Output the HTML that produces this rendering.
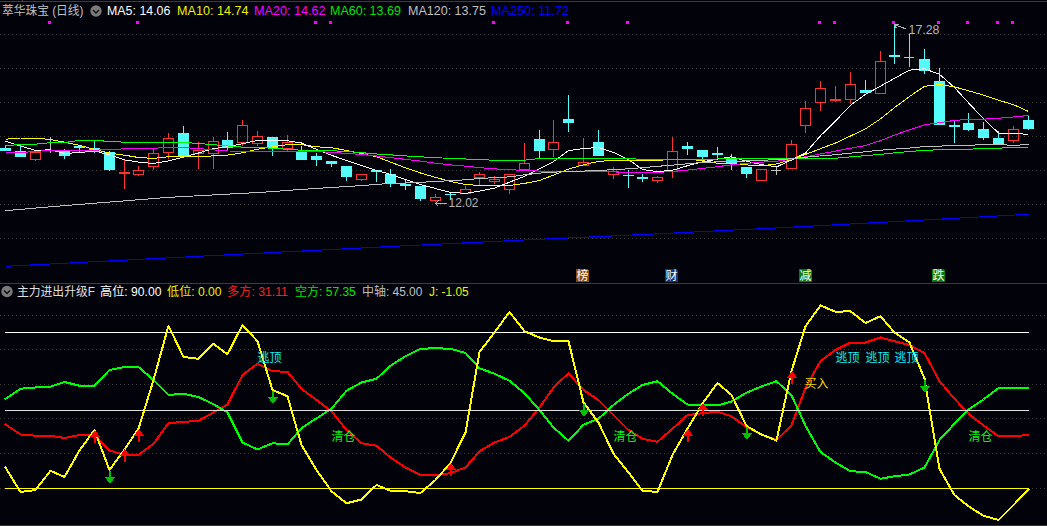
<!DOCTYPE html>
<html lang="zh-CN"><head><meta charset="utf-8"><title>萃华珠宝 (日线)</title>
<style>
html,body{margin:0;padding:0;background:#02020b;overflow:hidden}
#c{position:relative;width:1047px;height:526px;overflow:hidden;background:#02020b;font-family:"Liberation Sans","Noto Sans CJK SC",sans-serif;font-size:12px}
.t{position:absolute;white-space:nowrap;line-height:18px;height:18px;transform-origin:0 50%}
</style></head><body><div id="c">
<svg width="1047" height="526" viewBox="0 0 1047 526" style="position:absolute;left:0;top:0">
<rect width="1047" height="526" fill="#02020b"/>
<g shape-rendering="crispEdges">
<rect x="0" y="1" width="1047" height="1" fill="#3c3c3c"/>
<rect x="22" y="0" width="1" height="2" fill="#4a4a4a"/>
<rect x="0" y="283" width="1047" height="1" fill="#3c3c3c"/>
<rect x="0" y="525" width="1047" height="1" fill="#303030"/>
<line x1="0" y1="34.5" x2="1047" y2="34.5" stroke="#3a3a3a" stroke-width="1" stroke-dasharray="1 3"/>
<line x1="0" y1="68.5" x2="1047" y2="68.5" stroke="#3a3a3a" stroke-width="1" stroke-dasharray="1 3"/>
<line x1="0" y1="102.5" x2="1047" y2="102.5" stroke="#3a3a3a" stroke-width="1" stroke-dasharray="1 3"/>
<line x1="0" y1="136.5" x2="1047" y2="136.5" stroke="#3a3a3a" stroke-width="1" stroke-dasharray="1 3"/>
<line x1="0" y1="170.5" x2="1047" y2="170.5" stroke="#3a3a3a" stroke-width="1" stroke-dasharray="1 3"/>
<line x1="0" y1="204.5" x2="1047" y2="204.5" stroke="#3a3a3a" stroke-width="1" stroke-dasharray="1 3"/>
<line x1="0" y1="238.5" x2="1047" y2="238.5" stroke="#3a3a3a" stroke-width="1" stroke-dasharray="1 3"/>
<line x1="0" y1="315.5" x2="1047" y2="315.5" stroke="#3a3a3a" stroke-width="1" stroke-dasharray="1 3"/>
<line x1="0" y1="349.5" x2="1047" y2="349.5" stroke="#3a3a3a" stroke-width="1" stroke-dasharray="1 3"/>
<line x1="0" y1="384.5" x2="1047" y2="384.5" stroke="#3a3a3a" stroke-width="1" stroke-dasharray="1 3"/>
<line x1="0" y1="418.5" x2="1047" y2="418.5" stroke="#3a3a3a" stroke-width="1" stroke-dasharray="1 3"/>
<line x1="0" y1="453.5" x2="1047" y2="453.5" stroke="#3a3a3a" stroke-width="1" stroke-dasharray="1 3"/>
<line x1="0" y1="488.5" x2="1047" y2="488.5" stroke="#3a3a3a" stroke-width="1" stroke-dasharray="1 3"/>
<rect x="48" y="21" width="3" height="3" fill="#ff00ff"/>
<rect x="136" y="21" width="3" height="3" fill="#ff00ff"/>
<rect x="314" y="21" width="3" height="3" fill="#ff00ff"/>
<rect x="329" y="21" width="3" height="3" fill="#ff00ff"/>
<rect x="492" y="21" width="3" height="3" fill="#ff00ff"/>
<rect x="566" y="21" width="3" height="3" fill="#ff00ff"/>
<rect x="626" y="21" width="3" height="3" fill="#ff00ff"/>
<rect x="818" y="21" width="3" height="3" fill="#ff00ff"/>
<rect x="833" y="21" width="3" height="3" fill="#ff00ff"/>
<rect x="892" y="21" width="3" height="3" fill="#ff00ff"/>
<rect x="937" y="21" width="3" height="3" fill="#ff00ff"/>
<rect x="966" y="21" width="3" height="3" fill="#ff00ff"/>
<rect x="996" y="21" width="3" height="3" fill="#ff00ff"/>
<rect x="1011" y="21" width="3" height="3" fill="#ff00ff"/>
<rect x="5" y="145" width="1" height="6" fill="#54fcfc"/>
<rect x="0" y="148" width="11" height="3" fill="#54fcfc"/>
<rect x="20" y="146" width="1" height="11" fill="#54fcfc"/>
<rect x="15" y="151" width="11" height="6" fill="#54fcfc"/>
<rect x="35" y="160" width="1" height="1" fill="#ff3232"/>
<rect x="30.5" y="152.5" width="10" height="7" fill="none" stroke="#ff3232" stroke-width="1"/>
<rect x="50" y="137" width="1" height="16" fill="#c0c0c0"/>
<rect x="45" y="150" width="10" height="1" fill="#c0c0c0"/>
<rect x="64" y="149" width="1" height="10" fill="#54fcfc"/>
<rect x="59" y="150" width="11" height="6" fill="#54fcfc"/>
<rect x="79" y="145" width="1" height="8" fill="#54fcfc"/>
<rect x="74" y="146" width="11" height="2" fill="#54fcfc"/>
<rect x="94" y="141" width="1" height="12" fill="#54fcfc"/>
<rect x="89" y="148" width="11" height="4" fill="#54fcfc"/>
<rect x="109" y="151" width="1" height="20" fill="#54fcfc"/>
<rect x="104" y="152" width="11" height="18" fill="#54fcfc"/>
<rect x="124" y="160" width="1" height="29" fill="#ff3232"/>
<rect x="119" y="172" width="11" height="2" fill="#ff3232"/>
<rect x="138" y="166" width="1" height="4" fill="#ff3232"/>
<rect x="138" y="175" width="1" height="1" fill="#ff3232"/>
<rect x="133.5" y="170.5" width="10" height="4" fill="none" stroke="#ff3232" stroke-width="1"/>
<rect x="153" y="149" width="1" height="4" fill="#ff3232"/>
<rect x="153" y="167" width="1" height="3" fill="#ff3232"/>
<rect x="148.5" y="153.5" width="10" height="13" fill="none" stroke="#ff3232" stroke-width="1"/>
<rect x="168" y="133" width="1" height="5" fill="#ff3232"/>
<rect x="168" y="153" width="1" height="6" fill="#ff3232"/>
<rect x="163.5" y="138.5" width="10" height="14" fill="none" stroke="#ff3232" stroke-width="1"/>
<rect x="183" y="126" width="1" height="31" fill="#54fcfc"/>
<rect x="178" y="133" width="11" height="24" fill="#54fcfc"/>
<rect x="198" y="142" width="1" height="8" fill="#ff3232"/>
<rect x="198" y="154" width="1" height="15" fill="#ff3232"/>
<rect x="193.5" y="150.5" width="10" height="3" fill="none" stroke="#ff3232" stroke-width="1"/>
<rect x="213" y="137" width="1" height="4" fill="#ff3232"/>
<rect x="213" y="154" width="1" height="15" fill="#ff3232"/>
<rect x="208.5" y="141.5" width="10" height="12" fill="none" stroke="#ff3232" stroke-width="1"/>
<rect x="227" y="132" width="1" height="19" fill="#54fcfc"/>
<rect x="222" y="140" width="11" height="8" fill="#54fcfc"/>
<rect x="242" y="120" width="1" height="5" fill="#ff3232"/>
<rect x="242" y="143" width="1" height="3" fill="#ff3232"/>
<rect x="237.5" y="125.5" width="10" height="17" fill="none" stroke="#ff3232" stroke-width="1"/>
<rect x="257" y="131" width="1" height="5" fill="#ff3232"/>
<rect x="257" y="144" width="1" height="2" fill="#ff3232"/>
<rect x="252.5" y="136.5" width="10" height="7" fill="none" stroke="#ff3232" stroke-width="1"/>
<rect x="272" y="137" width="1" height="19" fill="#54fcfc"/>
<rect x="267" y="137" width="11" height="11" fill="#54fcfc"/>
<rect x="287" y="135" width="1" height="7" fill="#ff3232"/>
<rect x="287" y="149" width="1" height="3" fill="#ff3232"/>
<rect x="282.5" y="142.5" width="10" height="6" fill="none" stroke="#ff3232" stroke-width="1"/>
<rect x="301" y="146" width="1" height="14" fill="#54fcfc"/>
<rect x="296" y="152" width="11" height="8" fill="#54fcfc"/>
<rect x="316" y="153" width="1" height="13" fill="#54fcfc"/>
<rect x="311" y="156" width="11" height="4" fill="#54fcfc"/>
<rect x="331" y="161" width="1" height="6" fill="#54fcfc"/>
<rect x="326" y="161" width="11" height="3" fill="#54fcfc"/>
<rect x="346" y="166" width="1" height="15" fill="#54fcfc"/>
<rect x="341" y="166" width="11" height="11" fill="#54fcfc"/>
<rect x="361" y="180" width="1" height="1" fill="#ff3232"/>
<rect x="356.5" y="174.5" width="10" height="5" fill="none" stroke="#ff3232" stroke-width="1"/>
<rect x="376" y="170" width="1" height="12" fill="#54fcfc"/>
<rect x="371" y="170" width="11" height="2" fill="#54fcfc"/>
<rect x="390" y="169" width="1" height="18" fill="#54fcfc"/>
<rect x="385" y="174" width="11" height="10" fill="#54fcfc"/>
<rect x="405" y="180" width="1" height="10" fill="#54fcfc"/>
<rect x="400" y="184" width="11" height="2" fill="#54fcfc"/>
<rect x="420" y="186" width="1" height="15" fill="#54fcfc"/>
<rect x="415" y="186" width="11" height="13" fill="#54fcfc"/>
<rect x="435" y="194" width="1" height="3" fill="#ff3232"/>
<rect x="435" y="201" width="1" height="1" fill="#ff3232"/>
<rect x="430.5" y="197.5" width="10" height="3" fill="none" stroke="#ff3232" stroke-width="1"/>
<rect x="450" y="192" width="1" height="8" fill="#54fcfc"/>
<rect x="445" y="194" width="11" height="1" fill="#54fcfc"/>
<rect x="465" y="186" width="1" height="3" fill="#ff3232"/>
<rect x="460.5" y="189.5" width="10" height="4" fill="none" stroke="#ff3232" stroke-width="1"/>
<rect x="479" y="172" width="1" height="2" fill="#ff3232"/>
<rect x="479" y="178" width="1" height="7" fill="#ff3232"/>
<rect x="474.5" y="174.5" width="10" height="3" fill="none" stroke="#ff3232" stroke-width="1"/>
<rect x="494" y="176" width="1" height="3" fill="#ff3232"/>
<rect x="494" y="182" width="1" height="2" fill="#ff3232"/>
<rect x="489.5" y="179.5" width="10" height="2" fill="none" stroke="#ff3232" stroke-width="1"/>
<rect x="509" y="190" width="1" height="4" fill="#ff3232"/>
<rect x="504.5" y="174.5" width="10" height="15" fill="none" stroke="#ff3232" stroke-width="1"/>
<rect x="524" y="143" width="1" height="20" fill="#ff3232"/>
<rect x="519.5" y="163.5" width="10" height="6" fill="none" stroke="#ff3232" stroke-width="1"/>
<rect x="539" y="130" width="1" height="29" fill="#54fcfc"/>
<rect x="534" y="139" width="11" height="12" fill="#54fcfc"/>
<rect x="553" y="120" width="1" height="22" fill="#ff3232"/>
<rect x="553" y="150" width="1" height="7" fill="#ff3232"/>
<rect x="548.5" y="142.5" width="10" height="7" fill="none" stroke="#ff3232" stroke-width="1"/>
<rect x="568" y="95" width="1" height="37" fill="#54fcfc"/>
<rect x="563" y="119" width="11" height="4" fill="#54fcfc"/>
<rect x="583" y="138" width="1" height="24" fill="#ff3232"/>
<rect x="578.5" y="162.5" width="10" height="3" fill="none" stroke="#ff3232" stroke-width="1"/>
<rect x="598" y="130" width="1" height="26" fill="#54fcfc"/>
<rect x="593" y="142" width="11" height="14" fill="#54fcfc"/>
<rect x="613" y="167" width="1" height="4" fill="#ff3232"/>
<rect x="613" y="175" width="1" height="4" fill="#ff3232"/>
<rect x="608.5" y="171.5" width="10" height="3" fill="none" stroke="#ff3232" stroke-width="1"/>
<rect x="628" y="170" width="1" height="18" fill="#54fcfc"/>
<rect x="623" y="175" width="11" height="1" fill="#54fcfc"/>
<rect x="642" y="174" width="1" height="8" fill="#54fcfc"/>
<rect x="637" y="177" width="11" height="2" fill="#54fcfc"/>
<rect x="657" y="176" width="1" height="1" fill="#ff3232"/>
<rect x="657" y="181" width="1" height="2" fill="#ff3232"/>
<rect x="652.5" y="177.5" width="10" height="3" fill="none" stroke="#ff3232" stroke-width="1"/>
<rect x="672" y="137" width="1" height="14" fill="#ff3232"/>
<rect x="672" y="172" width="1" height="6" fill="#ff3232"/>
<rect x="667.5" y="151.5" width="10" height="20" fill="none" stroke="#ff3232" stroke-width="1"/>
<rect x="687" y="142" width="1" height="13" fill="#54fcfc"/>
<rect x="682" y="146" width="11" height="3" fill="#54fcfc"/>
<rect x="702" y="150" width="1" height="10" fill="#54fcfc"/>
<rect x="697" y="150" width="11" height="7" fill="#54fcfc"/>
<rect x="717" y="147" width="1" height="11" fill="#54fcfc"/>
<rect x="712" y="153" width="11" height="2" fill="#54fcfc"/>
<rect x="731" y="154" width="1" height="16" fill="#54fcfc"/>
<rect x="726" y="158" width="11" height="6" fill="#54fcfc"/>
<rect x="746" y="167" width="1" height="11" fill="#54fcfc"/>
<rect x="741" y="167" width="11" height="7" fill="#54fcfc"/>
<rect x="756.5" y="169.5" width="10" height="11" fill="none" stroke="#ff3232" stroke-width="1"/>
<rect x="776" y="167" width="1" height="8" fill="#c0c0c0"/>
<rect x="771" y="170" width="10" height="1" fill="#c0c0c0"/>
<rect x="791" y="140" width="1" height="4" fill="#ff3232"/>
<rect x="786.5" y="144.5" width="10" height="24" fill="none" stroke="#ff3232" stroke-width="1"/>
<rect x="805" y="101" width="1" height="7" fill="#ff3232"/>
<rect x="805" y="126" width="1" height="7" fill="#ff3232"/>
<rect x="800.5" y="108.5" width="10" height="17" fill="none" stroke="#ff3232" stroke-width="1"/>
<rect x="820" y="81" width="1" height="7" fill="#ff3232"/>
<rect x="820" y="103" width="1" height="8" fill="#ff3232"/>
<rect x="815.5" y="88.5" width="10" height="14" fill="none" stroke="#ff3232" stroke-width="1"/>
<rect x="835" y="86" width="1" height="16" fill="#ff3232"/>
<rect x="830" y="99" width="11" height="2" fill="#ff3232"/>
<rect x="850" y="72" width="1" height="12" fill="#ff3232"/>
<rect x="850" y="100" width="1" height="4" fill="#ff3232"/>
<rect x="845.5" y="84.5" width="10" height="15" fill="none" stroke="#ff3232" stroke-width="1"/>
<rect x="865" y="80" width="1" height="13" fill="#54fcfc"/>
<rect x="860" y="90" width="11" height="3" fill="#54fcfc"/>
<rect x="880" y="51" width="1" height="10" fill="#ff3232"/>
<rect x="875.5" y="61.5" width="10" height="32" fill="none" stroke="#ff3232" stroke-width="1"/>
<rect x="894" y="24" width="1" height="40" fill="#54fcfc"/>
<rect x="889" y="55" width="11" height="2" fill="#54fcfc"/>
<rect x="909" y="34" width="1" height="33" fill="#c0c0c0"/>
<rect x="904" y="57" width="10" height="1" fill="#c0c0c0"/>
<rect x="924" y="49" width="1" height="25" fill="#54fcfc"/>
<rect x="919" y="59" width="11" height="12" fill="#54fcfc"/>
<rect x="939" y="68" width="1" height="57" fill="#54fcfc"/>
<rect x="934" y="81" width="11" height="44" fill="#54fcfc"/>
<rect x="954" y="120" width="1" height="23" fill="#54fcfc"/>
<rect x="949" y="125" width="11" height="2" fill="#54fcfc"/>
<rect x="968" y="113" width="1" height="18" fill="#54fcfc"/>
<rect x="963" y="123" width="11" height="7" fill="#54fcfc"/>
<rect x="983" y="122" width="1" height="18" fill="#54fcfc"/>
<rect x="978" y="129" width="11" height="9" fill="#54fcfc"/>
<rect x="998" y="131" width="1" height="13" fill="#54fcfc"/>
<rect x="993" y="138" width="11" height="6" fill="#54fcfc"/>
<rect x="1013" y="126" width="1" height="3" fill="#ff3232"/>
<rect x="1013" y="141" width="1" height="2" fill="#ff3232"/>
<rect x="1008.5" y="129.5" width="10" height="11" fill="none" stroke="#ff3232" stroke-width="1"/>
<rect x="1028" y="116" width="1" height="14" fill="#54fcfc"/>
<rect x="1023" y="120" width="11" height="9" fill="#54fcfc"/>
</g>
<g fill="none" stroke-width="1" shape-rendering="crispEdges" stroke-linejoin="round">
<polyline stroke="#0000ff" points="5.5,266.3 220,255.2 400,246 524,240 650,234.2 785,227.5 900,221.3 1028.5,214.3"/>
<polyline stroke="#ffffff" points="5.5,141.2 20.5,145.96 35.5,150.4 50.5,149.8 64.5,153.4 79.5,152.6 94.5,150.9 109.5,154.94 124.5,159.89 138.5,162.07 153.5,163.5 168.5,160.95 183.5,157.19 198.5,153.02 213.5,148.65 227.5,146.7 242.5,143.7 257.5,140.4 272.5,140.1 287.5,140.73 301.5,143 316.5,149.38 331.5,155.34 346.5,160.4 361.5,165.38 376.5,170.48 390.5,174.37 405.5,179.54 420.5,184.6 435.5,188.5 450.5,192.4 465.5,193.4 479.5,191.2 494.5,188.1 509.5,182.2 524.5,176.39 539.5,168.79 553.5,161.6 568.5,150.61 583.5,148.45 598.5,147.6 613.5,152.34 628.5,159.53 642.5,169.49 657.5,171.6 672.5,170.29 687.5,165.69 702.5,161.94 717.5,159.12 731.5,156.8 746.5,161.23 761.5,164.6 776.5,166.9 791.5,160.01 805.5,153 820.5,135.8 835.5,121 850.5,105.2 865.5,94.4 880.5,86.1 894.5,78.3 909.5,70.1 924.5,68.8 939.5,74.3 954.5,87.5 968.5,102.8 983.5,118.8 998.5,133 1013.5,133.3 1028.5,134.4"/>
<polyline stroke="#ffff00" points="5.5,139.2 20.5,138 35.5,138 50.5,139.61 64.5,142.16 79.5,145.4 94.5,149.35 109.5,153.15 124.5,155.18 138.5,157.5 153.5,158.4 168.5,156.7 183.5,156.7 198.5,156.7 213.5,155.9 227.5,155.1 242.5,152.8 257.5,149.2 272.5,146.8 287.5,144.6 301.5,144.6 316.5,146.81 331.5,147.68 346.5,150.52 361.5,153.56 376.5,156.71 390.5,162.1 405.5,167.8 420.5,173 435.5,177.4 450.5,181.4 465.5,184.5 479.5,185.5 494.5,185.5 509.5,185.5 524.5,183.4 539.5,180.5 553.5,175.1 568.5,169.1 583.5,164.8 598.5,161.4 613.5,160.4 628.5,160.4 642.5,160.2 657.5,160.2 672.5,159.68 687.5,159.4 702.5,160.48 717.5,163.28 731.5,163.95 746.5,164.95 761.5,165.7 776.5,164 791.5,159.62 805.5,154.4 820.5,148.7 835.5,143 850.5,136 865.5,128.8 880.5,118.9 894.5,107.6 909.5,96.5 924.5,86.3 939.5,84.5 954.5,86.9 968.5,90.8 983.5,95.1 998.5,100.3 1013.5,104.6 1028.5,111.5"/>
<polyline stroke="#ff00ff" points="5.5,152.4 20.5,152.4 35.5,151.6 50.5,150.1 64.5,150.4 79.5,150.4 94.5,150.1 109.5,149.77 124.5,148.78 138.5,148.41 153.5,148.1 168.5,147.8 183.5,147.6 198.5,148.55 213.5,149.85 227.5,151 242.5,151.1 257.5,151.1 272.5,151.1 287.5,151.1 301.5,151.3 316.5,151.6 331.5,152.33 346.5,153.44 361.5,154.39 376.5,156.01 390.5,157.62 405.5,159.35 420.5,161.09 435.5,163.19 450.5,164.88 465.5,166.13 479.5,167.63 494.5,168.84 509.5,169.82 524.5,170.26 539.5,171.12 553.5,171.4 568.5,171.4 583.5,171.4 598.5,171.62 613.5,171.94 628.5,172.4 642.5,172.4 657.5,172.4 672.5,171.51 687.5,170.07 702.5,168.44 717.5,166.68 731.5,164.82 746.5,163.41 761.5,162.14 776.5,161.3 791.5,159.12 805.5,156.8 820.5,153.9 835.5,151.1 850.5,148.2 865.5,145.5 880.5,140.7 894.5,135.1 909.5,129.9 924.5,124.8 939.5,122.7 954.5,120.4 968.5,119.4 983.5,119.2 998.5,118.2 1013.5,117 1028.5,115.4"/>
<polyline stroke="#00ff00" points="5.5,145.4 20.5,144.69 35.5,144.16 50.5,142.6 64.5,142.6 79.5,140.4 94.5,140.4 109.5,141.42 124.5,142.2 138.5,142.2 153.5,142.2 168.5,142.3 183.5,142.3 198.5,143.54 213.5,144.68 227.5,146 242.5,147.11 257.5,147.61 272.5,148.15 287.5,149.35 301.5,150.2 316.5,150.5 331.5,150.72 346.5,151.45 361.5,152.67 376.5,153.96 390.5,154.81 405.5,155.92 420.5,156.83 435.5,157.64 450.5,158.43 465.5,158.97 479.5,159.81 494.5,160.11 509.5,160.4 524.5,160.15 539.5,158.5 553.5,158.5 568.5,158.5 583.5,158.5 598.5,158.5 613.5,158.5 628.5,158.5 642.5,159.5 657.5,159.5 672.5,159.5 687.5,159.5 702.5,159.5 717.5,158.98 731.5,158.78 746.5,158.5 761.5,158.5 776.5,158.5 791.5,158.5 805.5,158.5 820.5,158.5 835.5,158.19 850.5,156.89 865.5,155.66 880.5,154.32 894.5,152.9 909.5,151.42 924.5,150.42 939.5,149.68 954.5,149.48 968.5,149.25 983.5,148.48 998.5,148.14 1013.5,147.56 1028.5,147.15"/>
<polyline stroke="#c0c0c0" points="5.5,210.7 50,206.8 100,202.8 168,197.4 212,195 262,192.3 300,189.5 346.5,186.5 361.5,185.63 376.5,184.34 390.5,183.49 405.5,182.98 420.5,182.36 435.5,181.46 450.5,180.65 465.5,179.79 479.5,178.48 494.5,177.67 509.5,176.89 524.5,174.79 539.5,173.12 553.5,172.18 568.5,171.39 583.5,171.07 598.5,170.54 613.5,169.64 628.5,168.79 642.5,167.65 657.5,166.34 672.5,165.11 687.5,163.79 702.5,162.44 717.5,161.86 731.5,161.47 746.5,160.95 761.5,160.18 776.5,159.81 791.5,158.73 805.5,157.23 820.5,155.92 835.5,154.68 850.5,153.17 865.5,151.73 880.5,150.17 894.5,149.14 909.5,148.1 924.5,146.6 939.5,146.1 954.5,145.5 968.5,145.5 983.5,144.4 998.5,144.4 1013.5,145.5 1028.5,144.4"/>
</g>
<g font-family="'Liberation Sans',sans-serif" font-size="12" fill="#b4b4b4" stroke="#b4b4b4" stroke-width="1" shape-rendering="crispEdges">
<path d="M435.5 203.5H447 M435.5 203.5l3 -3 M435.5 203.5l3 3" fill="none"/>
<path d="M894.5 24.5L906 29 M894.5 24.5l4.5 -.5 M894.5 24.5l2 4" fill="none"/>
</g>
<text x="448.5" y="207" font-family="'Liberation Sans',sans-serif" font-size="12" fill="#b4b4b4" textLength="30" lengthAdjust="spacingAndGlyphs">12.02</text>
<text x="908.5" y="33.5" font-family="'Liberation Sans',sans-serif" font-size="12" fill="#b4b4b4" textLength="31" lengthAdjust="spacingAndGlyphs">17.28</text>
<g shape-rendering="crispEdges">
<rect x="5" y="332" width="1024" height="1" fill="#ffffff"/>
<rect x="5" y="488" width="1024" height="1" fill="#ffff00"/>
</g>
<g fill="none" stroke-width="2" shape-rendering="crispEdges" stroke-linejoin="round" stroke-linecap="round">
<polyline stroke="#ff0000" points="5.5,424.5 20.5,434.5 35.5,435.75 50.5,435.75 64.5,438 79.5,435 94.5,435 109.5,450.5 124.5,455 138.5,455 153.5,443.75 168.5,423 183.5,422 198.5,420.75 213.5,412.5 227.5,404.5 242.5,375 257.5,363.75 272.5,371.25 287.5,371.75 301.5,388.75 316.5,400 331.5,411.25 346.5,430 361.5,443.25 376.5,445.75 390.5,457.5 405.5,467.5 420.5,475 435.5,475 450.5,473.25 465.5,467.5 479.5,451.25 494.5,442.5 509.5,437 524.5,425.5 539.5,407.5 553.5,387.5 568.5,373.25 583.5,390 598.5,400 613.5,415 628.5,430 642.5,438.75 657.5,441.75 672.5,428.75 687.5,415 702.5,413.25 717.5,411.5 731.5,416.5 746.5,427 761.5,434.5 776.5,440 791.5,425.2 805.5,387.8 820.5,361 835.5,350 850.5,342.5 865.5,342.5 880.5,337.5 894.5,341.25 909.5,345 924.5,353 939.5,381.25 954.5,398.75 968.5,413.75 983.5,425.5 998.5,436.25 1013.5,436.25 1028.5,435"/>
<polyline stroke="#00ff00" points="5.5,398.75 20.5,388.75 35.5,387.5 50.5,386.75 64.5,382 79.5,385.75 94.5,385.75 109.5,370 124.5,367 138.5,367 153.5,380 168.5,395 183.5,393.75 198.5,397 213.5,404.25 227.5,412.5 242.5,442.5 257.5,449.5 272.5,443.25 287.5,444.5 301.5,428 316.5,418.4 331.5,408.75 346.5,390.75 361.5,382.5 376.5,378.75 390.5,365.75 405.5,356.25 420.5,348.75 435.5,348.25 450.5,348.75 465.5,353 479.5,368.25 494.5,373.75 509.5,380.75 524.5,393.25 539.5,410 553.5,427.5 568.5,440.75 583.5,424.75 598.5,418.75 613.5,405 628.5,393.75 642.5,385 657.5,381.25 672.5,393.75 687.5,404.5 702.5,405.2 717.5,405.5 731.5,401.5 746.5,392.75 761.5,386.5 776.5,381.2 791.5,395.2 805.5,425.8 820.5,452 835.5,462.5 850.5,471.25 865.5,472 880.5,478.75 894.5,476.25 909.5,474.5 924.5,467.5 939.5,440 954.5,423.75 968.5,409.4 983.5,399.5 998.5,388.25 1013.5,388.25 1028.5,388.25"/>
</g>
<rect x="5" y="410" width="1024" height="1" fill="#e0e0e0" shape-rendering="crispEdges"/>
<g fill="none" stroke-width="2" shape-rendering="crispEdges" stroke-linejoin="round" stroke-linecap="round">
<polyline stroke="#ffff00" points="5.5,467.5 20.5,492 35.5,490 50.5,470.75 64.5,477 79.5,450.5 94.5,430 109.5,470 124.5,449.5 138.5,428.75 153.5,380 168.5,325.75 183.5,357 198.5,358.75 213.5,343.75 227.5,354.25 242.5,325 257.5,341.25 272.5,390 287.5,396.25 301.5,445 316.5,470 331.5,491.25 346.5,503.25 361.5,499.5 376.5,485 390.5,490.75 405.5,491.25 420.5,493 435.5,480 450.5,463 465.5,432.5 479.5,352 494.5,332.5 509.5,312 524.5,331.25 539.5,337.5 553.5,341.25 568.5,341.25 583.5,402.5 598.5,422.5 613.5,453.75 628.5,472.5 642.5,490.75 657.5,492 672.5,455 687.5,428.75 702.5,403.5 717.5,383 731.5,395 746.5,426 761.5,434.5 776.5,440.5 791.5,371 805.5,326.25 820.5,305.5 835.5,311.75 850.5,311.25 865.5,323 880.5,316.25 894.5,332.5 909.5,342.5 924.5,378.5 939.5,468.75 954.5,495 968.5,506.25 983.5,515.75 998.5,520 1013.5,505 1028.5,489.5"/>
</g>
<g shape-rendering="crispEdges">
<path d="M94 431h2l4 6h-4v6h-2v-6h-4z" fill="#ff0000"/>
<path d="M124 450h2l4 6h-4v6h-2v-6h-4z" fill="#ff0000"/>
<path d="M138 430h2l4 6h-4v6h-2v-6h-4z" fill="#ff0000"/>
<path d="M450 464h2l4 6h-4v6h-2v-6h-4z" fill="#ff0000"/>
<path d="M687 430h2l4 6h-4v6h-2v-6h-4z" fill="#ff0000"/>
<path d="M702 404h2l4 6h-4v6h-2v-6h-4z" fill="#ff0000"/>
<path d="M791 372h2l4 6h-4v6h-2v-6h-4z" fill="#ff0000"/>
<path d="M109 471h2v6h4l-4 6h-2l-4 -6h4z" fill="#00c000"/>
<path d="M272 391h2v6h4l-4 6h-2l-4 -6h4z" fill="#00c000"/>
<path d="M583 404h2v6h4l-4 6h-2l-4 -6h4z" fill="#00c000"/>
<path d="M746 427h2v6h4l-4 6h-2l-4 -6h4z" fill="#00c000"/>
<path d="M924 380h2v6h4l-4 6h-2l-4 -6h4z" fill="#00c000"/>
</g>
<circle cx="96" cy="11" r="5.7" fill="#7a7a7a"/>
<path d="M93 10l3 3l3 -3" fill="none" stroke="#101014" stroke-width="1.4"/>
<circle cx="7" cy="291.5" r="5.7" fill="#7a7a7a"/>
<path d="M4 290.5l3 3l3 -3" fill="none" stroke="#101014" stroke-width="1.4"/>
<text x="257.5" y="362" font-family="'Liberation Sans','Noto Sans CJK SC',sans-serif" font-size="12" fill="#10ecf4" textLength="24" lengthAdjust="spacingAndGlyphs">逃顶</text>
<text x="835.5" y="362" font-family="'Liberation Sans','Noto Sans CJK SC',sans-serif" font-size="12" fill="#10ecf4" textLength="24" lengthAdjust="spacingAndGlyphs">逃顶</text>
<text x="865.5" y="362" font-family="'Liberation Sans','Noto Sans CJK SC',sans-serif" font-size="12" fill="#10ecf4" textLength="24" lengthAdjust="spacingAndGlyphs">逃顶</text>
<text x="894.5" y="362" font-family="'Liberation Sans','Noto Sans CJK SC',sans-serif" font-size="12" fill="#10ecf4" textLength="24" lengthAdjust="spacingAndGlyphs">逃顶</text>
<text x="331.5" y="441" font-family="'Liberation Sans','Noto Sans CJK SC',sans-serif" font-size="12" fill="#10f010" textLength="24" lengthAdjust="spacingAndGlyphs">清仓</text>
<text x="613.5" y="441" font-family="'Liberation Sans','Noto Sans CJK SC',sans-serif" font-size="12" fill="#10f010" textLength="24" lengthAdjust="spacingAndGlyphs">清仓</text>
<text x="968.5" y="441" font-family="'Liberation Sans','Noto Sans CJK SC',sans-serif" font-size="12" fill="#10f010" textLength="24" lengthAdjust="spacingAndGlyphs">清仓</text>
<text x="804.5" y="388" font-family="'Liberation Sans','Noto Sans CJK SC',sans-serif" font-size="12" fill="#f4dc00" textLength="24" lengthAdjust="spacingAndGlyphs">买入</text>
<path d="M576 269h11l2 2v11h-13z" fill="#8a4a08" shape-rendering="crispEdges"/>
<text x="576.5" y="280" font-family="'Liberation Sans','Noto Sans CJK SC',sans-serif" font-size="12" fill="#ffffff" textLength="12" lengthAdjust="spacingAndGlyphs">榜</text>
<path d="M665 269h11l2 2v11h-13z" fill="#0c3878" shape-rendering="crispEdges"/>
<text x="665.5" y="280" font-family="'Liberation Sans','Noto Sans CJK SC',sans-serif" font-size="12" fill="#ffffff" textLength="12" lengthAdjust="spacingAndGlyphs">财</text>
<path d="M799 269h11l2 2v11h-13z" fill="#0a7a0a" shape-rendering="crispEdges"/>
<text x="799.5" y="280" font-family="'Liberation Sans','Noto Sans CJK SC',sans-serif" font-size="12" fill="#ffffff" textLength="12" lengthAdjust="spacingAndGlyphs">减</text>
<path d="M932 269h11l2 2v11h-13z" fill="#0a7a0a" shape-rendering="crispEdges"/>
<text x="932.5" y="280" font-family="'Liberation Sans','Noto Sans CJK SC',sans-serif" font-size="12" fill="#ffffff" textLength="12" lengthAdjust="spacingAndGlyphs">跌</text>
</svg>
<span class="t" style="left:2px;top:2px;color:#c0c0c0;transform:scaleX(0.9781)">萃华珠宝 (日线)</span>
<span class="t" style="left:106.6px;top:2px;color:#ffffff;transform:scaleX(1.0330)">MA5: 14.06</span>
<span class="t" style="left:176.7px;top:2px;color:#f0f000;transform:scaleX(1.0507)">MA10: 14.74</span>
<span class="t" style="left:253.5px;top:2px;color:#ff00ff;transform:scaleX(1.0507)">MA20: 14.62</span>
<span class="t" style="left:330.4px;top:2px;color:#00e600;transform:scaleX(1.0419)">MA60: 13.69</span>
<span class="t" style="left:407.7px;top:2px;color:#c0c0c0;transform:scaleX(1.0426)">MA120: 13.75</span>
<span class="t" style="left:491.3px;top:2px;color:#0000ff;transform:scaleX(1.0552)">MA250: 11.72</span>
<span class="t" style="left:17.2px;top:283px;color:#e0e0e0;transform:scaleX(0.9818)">主力进出升级F</span>
<span class="t" style="left:100.2px;top:283px;color:#ffffff;transform:scaleX(1.0115)">高位: 90.00</span>
<span class="t" style="left:167.3px;top:283px;color:#f0f000;transform:scaleX(1.0105)">低位: 0.00</span>
<span class="t" style="left:227.4px;top:283px;color:#ff2020;transform:scaleX(1.0182)">多方: 31.11</span>
<span class="t" style="left:294.5px;top:283px;color:#00e600;transform:scaleX(1.0016)">空方: 57.35</span>
<span class="t" style="left:362px;top:283px;color:#c0c0c0;transform:scaleX(0.9950)">中轴: 45.00</span>
<span class="t" style="left:428.6px;top:283px;color:#f0f000;transform:scaleX(0.9917)">J: -1.05</span>
</div></body></html>
